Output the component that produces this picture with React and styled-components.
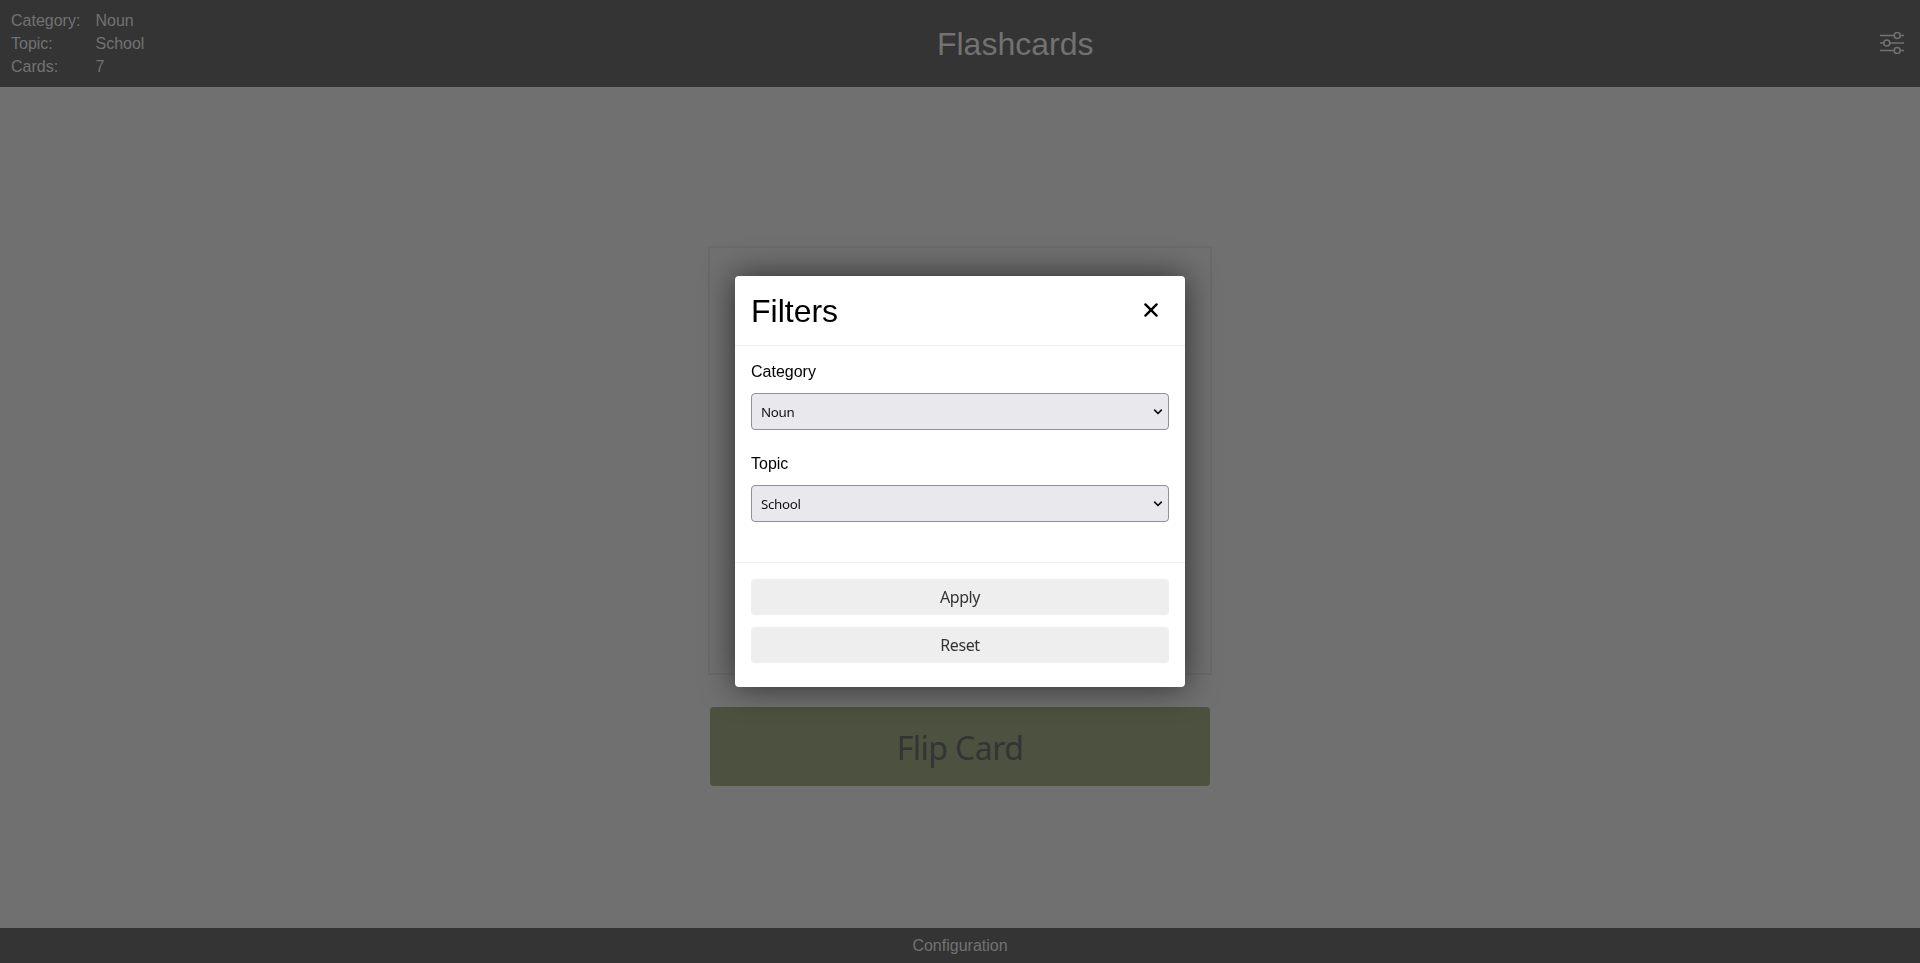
import React from 'react';
import styled, { createGlobalStyle } from 'styled-components';

const Global = createGlobalStyle`
  *, *::before, *::after { box-sizing: border-box; }
  body { margin: 0; font: 16px/23px "Liberation Sans", Arial, sans-serif; color: #000; background: #707070; }
  button { font-family: "Noto Sans", sans-serif; border: 0; }
`;

const Page = styled.div`
  display: flex;
  flex-direction: column;
  height: 100vh;
  overflow: hidden;
  color: #727272;
`;

const Header = styled.header`
  display: flex;
  justify-content: space-between;
  align-items: center;
  height: 87px;
  flex: none;
  padding: 0 16px 0 11px;
  background: #343434;
`;

const Info = styled.dl`
  display: grid;
  grid-template-columns: 84.5px auto;
  margin: 0;
  line-height: 23px;
`;
const Term = styled.dt``;
const Value = styled.dd`margin: 0;`;

const Title = styled.h1`
  margin: 0 0 0 6px;
  font-size: 32px;
  line-height: 36px;
  font-weight: 400;
`;

const IconButton = styled.button`
  display: flex;
  padding: 0 0 2px;
  background: none;
  color: inherit;
`;

const Main = styled.main`
  display: flex;
  flex: 1;
  flex-direction: column;
  align-items: center;
  padding-top: 159px;
`;

const Card = styled.section`
  width: 504px;
  height: 429px;
  flex: none;
  border: 2px solid #6a6a6a;
`;

const FlipButton = styled.button`
  width: 500px;
  height: 79px;
  margin-top: 32px;
  padding: 2px 0 0;
  border-radius: 4px;
  background: #4d513f;
  color: #343434;
  font-size: 32px;
  letter-spacing: -0.55px;
`;

const Footer = styled.footer`
  height: 35px;
  flex: none;
  background: #343434;
  line-height: 35px;
  text-align: center;
`;

const Overlay = styled.div`
  position: fixed;
  inset: 0;
  display: flex;
  align-items: center;
  justify-content: center;
`;

const Dialog = styled.div`
  width: 450px;
  height: 411px;
  border-radius: 4px;
  background: #fff;
  box-shadow: 0 0 32px rgba(0, 0, 0, 0.6);
`;

const DialogHeader = styled.div`
  display: flex;
  align-items: center;
  justify-content: space-between;
  height: 70px;
  padding: 0 26px 0 16px;
  border-bottom: 1px solid #eee;
`;

const DialogTitle = styled.h2`
  margin: 0;
  font-size: 32px;
  line-height: 36px;
  font-weight: 400;
`;

const CloseButton = styled(IconButton)`
  padding-bottom: 1px;
  color: #000;
`;

const Fields = styled.div`
  display: flex;
  flex-direction: column;
  gap: 19px;
  height: 217px;
  padding: 14px 16px 0;
  border-bottom: 1px solid #eee;
`;

const Field = styled.label`
  display: flex;
  flex-direction: column;
  gap: 10px;
  height: 73px;
  line-height: 23px;
`;

const SelectWrap = styled.span`
  display: grid;
  height: 37px;
  align-items: center;
  & > * { grid-area: 1 / 1; }
  & > svg { justify-self: end; margin-right: 6px; pointer-events: none; }
`;

const Select = styled.select`
  width: 100%;
  height: 37px;
  padding: 1px 9px 0;
  appearance: none;
  border: 1px solid #8f8f9d;
  border-radius: 4px;
  background: #e9e9ed;
  color: #111;
  font: 13.333px "Noto Sans", sans-serif;
  letter-spacing: -0.3px;
`;

const Actions = styled.div`
  display: flex;
  flex-direction: column;
  gap: 12px;
  padding: 16px;
`;

const ActionButton = styled.button`
  height: 36px;
  padding: 0;
  border-radius: 4px;
  background: #eee;
  color: #333;
  font-size: 16px;
  letter-spacing: -0.4px;
`;

const SlidersIcon = () => (
  <svg width="24" height="22" viewBox="0 0 24 22" fill="none" stroke="currentColor" strokeWidth="1.6">
    <path d="M0 3.5H14M20.4 3.5H24M0 11H3.6M10 11H24M0 18.5H14M20.4 18.5H24" />
    <circle cx="17.2" cy="3.5" r="3" />
    <circle cx="6.8" cy="11" r="3" />
    <circle cx="17.2" cy="18.5" r="3" />
  </svg>
);

const CloseIcon = () => (
  <svg width="16" height="16" viewBox="0 0 16 16" stroke="currentColor" strokeWidth="2.3" strokeLinecap="round">
    <path d="M2.4 2.4L13.6 13.6M13.6 2.4L2.4 13.6" />
  </svg>
);

const Chevron = () => (
  <svg width="10" height="6" viewBox="0 0 10 6" fill="none" stroke="#111" strokeWidth="1.7" strokeLinecap="round" strokeLinejoin="round">
    <path d="M1.7 1.2L5 4.5L8.3 1.2" />
  </svg>
);

const details = [['Category:', 'Noun'], ['Topic:', 'School'], ['Cards:', '7']];
const filters = [['Category', 'Noun'], ['Topic', 'School']];

export default function App() {
  return (
    <>
      <Global />
      <Page>
        <Header>
          <Info>
            {details.map(([name, value]) => (
              <React.Fragment key={name}>
                <Term>{name}</Term>
                <Value>{value}</Value>
              </React.Fragment>
            ))}
          </Info>
          <Title>Flashcards</Title>
          <IconButton><SlidersIcon /></IconButton>
        </Header>
        <Main>
          <Card />
          <FlipButton>Flip Card</FlipButton>
        </Main>
        <Footer>Configuration</Footer>
      </Page>
      <Overlay>
        <Dialog role="dialog">
          <DialogHeader>
            <DialogTitle>Filters</DialogTitle>
            <CloseButton><CloseIcon /></CloseButton>
          </DialogHeader>
          <Fields>
            {filters.map(([name, value]) => (
              <Field key={name}>
                {name}
                <SelectWrap>
                  <Select defaultValue={value}><option>{value}</option></Select>
                  <Chevron />
                </SelectWrap>
              </Field>
            ))}
          </Fields>
          <Actions>
            <ActionButton>Apply</ActionButton>
            <ActionButton>Reset</ActionButton>
          </Actions>
        </Dialog>
      </Overlay>
    </>
  );
}
